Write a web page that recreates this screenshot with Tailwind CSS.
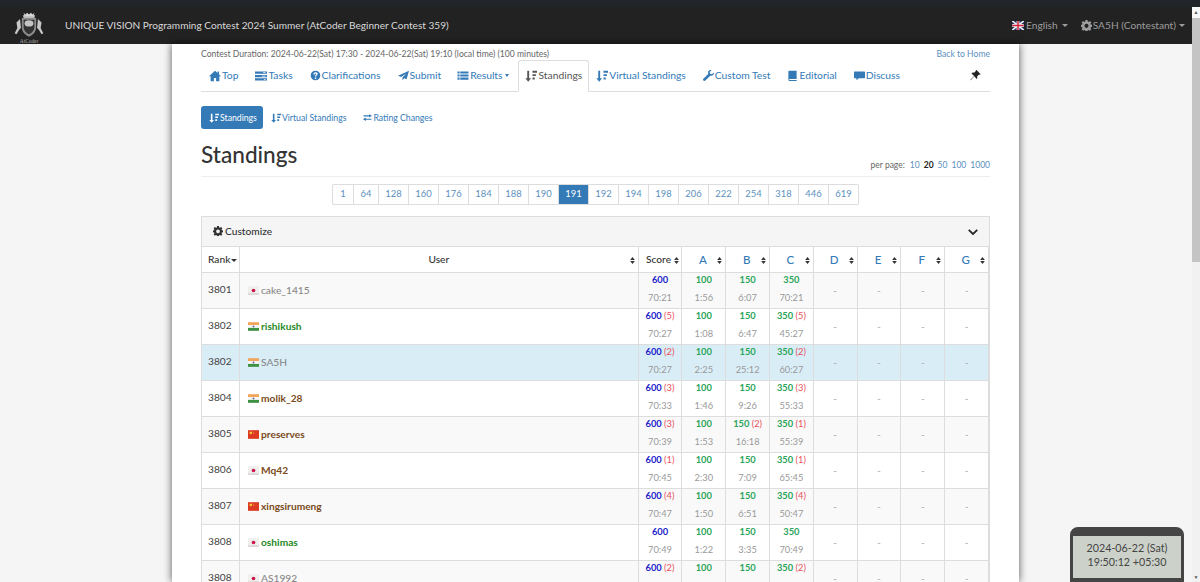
<!DOCTYPE html>
<html lang="en">
<head>
  <meta charset="UTF-8">
  <meta name="viewport" content="width=device-width, initial-scale=1.0">
  <title>Standings - AtCoder Beginner Contest 359</title>
  <script src="https://cdn.jsdelivr.net/npm/@tailwindcss/browser@4"></script>
</head>
<body class="h-[582px] overflow-hidden bg-[#f5f5f5] font-['Lato','Noto_Sans',sans-serif] text-[#333]">
  <svg class="hidden">
    <symbol id="i-home" viewBox="0 0 16 16"><path fill="currentColor" d="M8 1 0 8.400h2.200V15h4.300v-4.400h3V15h4.300V8.400H16l-2.600-2.500V2h-2v2Z"/></symbol>
    <symbol id="i-tasks" viewBox="0 0 16 16"><path fill="currentColor" d="M0 2h16v3H0Zm0 4.500h16v3H0ZM0 11h16v3H0Z"/><path fill="#fff" d="M11 3h3v1h-3Zm-2 4.500h5v1H9Zm3 4.500h2v1h-2Z"/></symbol>
    <symbol id="i-question" viewBox="0 0 16 16"><path fill="currentColor" fill-rule="evenodd" d="M8 1a7 7 0 1 1 0 14A7 7 0 0 1 8 1ZM7 11v2h2v-2ZM5 6.500h2c0-1 .5-1.300 1-1.300s1 .3 1 .9c0 1-2 1.200-2 3.400h2c0-1.600 2.200-1.900 2.200-3.900C11.200 4 9.800 3.300 8 3.300S5 4.500 5 6.500Z"/></symbol>
    <symbol id="i-send" viewBox="0 0 16 16"><path fill="currentColor" d="M16 1 0 8.500l4.500 1.700L12 5 6.500 11v4l2.500-3 3.500 1.500Z"/></symbol>
    <symbol id="i-list" viewBox="0 0 16 16"><path fill="currentColor" d="M0 2h3v3H0Zm4 0h12v3H4ZM0 6.500h3v3H0Zm4 0h12v3H4ZM0 11h3v3H0Zm4 0h12v3H4Z"/></symbol>
    <symbol id="i-sort" viewBox="0 0 16 16"><path fill="currentColor" d="M3 1h2.500v10H8l-3.700 4.500L.5 11H3Zm7 0h6v2.600h-6Zm0 4.500h4.500v2.600H10Zm0 4.500h3v2.600h-3Z"/></symbol>
    <symbol id="i-wrench" viewBox="0 0 16 16"><path fill="currentColor" d="M15.700 3.500 13 6.200l-2.600-.7-.7-2.600L12.400.3C10.300-.4 8 .6 7.500 2.800c-.2 1 0 1.900.3 2.600L.6 12.600c-.8.800-.8 2 0 2.800.8.800 2 .8 2.800 0l7.200-7.200c2.500 1 5.500-1 5.300-3.700 0-.4-.1-.7-.2-1Z"/></symbol>
    <symbol id="i-book" viewBox="0 0 16 16"><path fill="currentColor" d="M3.500 1H14v12H4c-.6 0-1 .3-1 .7s.4.800 1 .800h10V16H3.500C2.500 16 2 15.200 2 14.300V2.500C2 1.600 2.600 1 3.500 1Z"/></symbol>
    <symbol id="i-comment" viewBox="0 0 16 16"><path fill="currentColor" d="M1 2h14c.6 0 1 .4 1 1v8c0 .6-.4 1-1 1H7l-3.500 3v-3H1c-.6 0-1-.4-1-1V3c0-.6.4-1 1-1Z"/></symbol>
    <symbol id="i-pin" viewBox="0 0 16 16"><path fill="currentColor" d="m9.500 0 6 6-1.300 1-1-.6-2.800 2.800c.5 1.500.2 3-.8 4L6.300 9 1 15l-.6-.4L6 8.800 2 4.700c1-1 2.600-1.300 4-.8l2.800-2.700-.6-1Z"/></symbol>
    <symbol id="i-cog" viewBox="0 0 16 16"><path fill="currentColor" fill-rule="evenodd" d="M6.500 0h3l.4 2.200 1.300.6L13 1.500 15 3.600l-1.300 1.800.5 1.300 2.200.4v3l-2.200.4-.5 1.300 1.300 1.800-2.100 2.100-1.800-1.300-1.300.5-.4 2.200h-3l-.4-2.200-1.300-.5L3 15.700.9 13.600l1.300-1.800-.5-1.300L0 10.100v-3l1.700-.4.500-1.300L.9 3.600 3 1.500l1.800 1.300 1.300-.6ZM8 5.500a3 3 0 1 0 0 6 3 3 0 0 0 0-6Z"/></symbol>
    <symbol id="i-chevron" viewBox="0 0 16 16"><path fill="currentColor" d="m2.200 3.500 5.800 5.700 5.800-5.700 2 2L8 13.300.2 5.500Z"/></symbol>
    <symbol id="i-transfer" viewBox="0 0 16 16"><path fill="currentColor" d="M11 2l5 3-5 3V6H1V4h10ZM5 8v2h10v2H5v2l-5-3Z"/></symbol>
    <symbol id="i-updown" viewBox="0 0 8 12"><path fill="currentColor" d="M4 0 8 5H0ZM4 12 0 7h8Z"/></symbol>
    <symbol id="f-jp" viewBox="0 0 14 11"><path fill="#f1eeee" d="M0 0h14v11H0Z"/><path fill="#d8d4d4" d="M0 9h14v2H0Z"/><circle cx="7" cy="5.500" r="2.300" fill="#c9174a"/></symbol>
    <symbol id="f-in" viewBox="0 0 14 11"><path fill="#f2a65a" d="M0 0h14v3.700H0Z"/><path fill="#f6f6f6" d="M0 3.700h14v3.600H0Z"/><path fill="#3d9142" d="M0 7.300h14V11H0Z"/><circle cx="7" cy="5.500" r="1.200" fill="#5a6a9a"/></symbol>
    <symbol id="f-cn" viewBox="0 0 14 11"><path fill="#dc3a22" d="M0 0h14v11H0Z"/><path fill="#f5c842" d="M2 2h3v3H2Zm4 0h1v1H6Zm1 2h1v1H7Z"/></symbol>
    <symbol id="f-gb" viewBox="0 0 14 11"><path fill="#27306e" d="M0 0h14v11H0Z"/><path stroke="#f4f4f4" stroke-width="2" d="m0 0 14 11M14 0 0 11"/><path stroke="#f4f4f4" stroke-width="3.500" d="M7 0v11M0 5.500h14"/><path stroke="#d0243a" stroke-width="1.800" d="M7 0v11M0 5.500h14"/></symbol>
  </svg>

  <div class="h-[7px] bg-[#212529]"></div>
  <div class="flex h-[575px]">
    <div class="flex min-w-0 flex-1 flex-col">
      <header class="flex h-[37px] shrink-0 items-center bg-[#222] text-[#9d9d9d]">
        <svg class="ml-[10px] h-[34px] w-[38px] shrink-0 translate-y-[1px]" viewBox="0 0 38 38">
          <path fill="#bcbcbc" d="M12 6h14l-1 3H13Z"/>
          <path fill="#d8d8d8" d="M13 3l2 2 2-2 2 2 2-2 2 2 2-2-1 4H14Z"/>
          <path fill="#8d8d8d" d="M11 9h16v10c0 6-4 9-8 11-4-2-8-5-8-11Z"/>
          <path fill="#333" d="M13 11h12v8c0 4-3 7-6 8-3-1-6-4-6-8Z"/>
          <ellipse cx="19" cy="15" rx="5" ry="3.500" fill="#c4c4c4"/>
          <path fill="#c8c8c8" d="M9 10 5 14l1 6-3 6 2 1 3-5 2-2Zm20 0 4 4-1 6 3 6-2 1-3-5-2-2Z"/>
          <text x="19" y="36.500" text-anchor="middle" font-size="6" fill="#aaa" font-family="Liberation Serif, serif">AtCoder</text>
        </svg>
        <span class="ml-[17px] text-[10.1px] text-[#d9d9d9]">UNIQUE VISION Programming Contest 2024 Summer (AtCoder Beginner Contest 359)</span>
        <div class="ml-auto flex items-center pr-[7px] text-[10.2px]">
          <svg class="mr-[2px] h-[9px] w-[12px]"><use href="#f-gb"/></svg>
          <span>English</span>
          <span class="ml-[4px] h-0 w-0 border-x-[3px] border-t-[3px] border-x-transparent border-t-[#9d9d9d]"></span>
          <svg class="ml-[13px] mr-[1px] h-[11px] w-[11px]"><use href="#i-cog"/></svg>
          <span>SA5H (Contestant)</span>
          <span class="ml-[3px] h-0 w-0 border-x-[3px] border-t-[3px] border-x-transparent border-t-[#9d9d9d]"></span>
        </div>
      </header>

      <div class="min-h-0 flex-1">
        <main class="ml-[172px] h-full w-[847px] bg-white px-[29px] pt-[4px] shadow-[0_0_8px_rgba(0,0,0,0.65)]">
          <div class="flex h-[12px] items-start justify-between text-[8.6px] leading-[12px]">
            <span class="text-[#666]">Contest Duration: 2024-06-22(Sat) 17:30 - 2024-06-22(Sat) 19:10 (local time) (100 minutes)</span>
            <a class="text-[#5b8fbe]">Back to Home</a>
          </div>

          <nav class="flex h-[32px] items-end border-b border-[#ddd] text-[10.3px] text-[#337ab7]">
            <a class="flex h-[31px] items-center gap-[1px] px-[8px]"><svg class="h-[12px] w-[12px]"><use href="#i-home"/></svg>Top</a>
            <a class="ml-[1px] flex h-[31px] items-center gap-[1px] px-[8px]"><svg class="h-[12px] w-[12px]"><use href="#i-tasks"/></svg>Tasks</a>
            <a class="ml-[1px] flex h-[31px] items-center gap-[1px] px-[8px]"><svg class="h-[11px] w-[11px]"><use href="#i-question"/></svg>Clarifications</a>
            <a class="ml-[1px] flex h-[31px] items-center gap-[1px] px-[8px]"><svg class="h-[11px] w-[11px]"><use href="#i-send"/></svg>Submit</a>
            <a class="flex h-[31px] items-center gap-[1px] px-[8px]"><svg class="h-[11px] w-[12px]"><use href="#i-list"/></svg>Results<span class="ml-[2px] mr-[-1px] h-0 w-0 border-x-[2.500px] border-t-[3px] border-x-transparent border-t-[#337ab7]"></span></a>
            <a class="z-10 mb-[-1px] ml-[2px] flex h-[32px] items-center gap-[1px] rounded-t-[3px] border border-[#ddd] border-b-white bg-white px-[6px] text-[#555]"><svg class="h-[12px] w-[12px]"><use href="#i-sort"/></svg>Standings</a>
            <a class="ml-[-1px] flex h-[31px] items-center gap-[1px] px-[8px]"><svg class="h-[12px] w-[12px]"><use href="#i-sort"/></svg>Virtual Standings</a>
            <a class="ml-[1px] flex h-[31px] items-center gap-[1px] px-[8px]"><svg class="h-[11px] w-[11px]"><use href="#i-wrench"/></svg>Custom Test</a>
            <a class="ml-[1px] flex h-[31px] items-center gap-[1px] px-[8px]"><svg class="h-[11px] w-[11px]"><use href="#i-book"/></svg>Editorial</a>
            <a class="ml-[1px] flex h-[31px] items-center gap-[1px] px-[8px]"><svg class="h-[11px] w-[11px]"><use href="#i-comment"/></svg>Discuss</a>
            <svg class="mb-[10px] ml-auto mr-[9px] h-[11px] w-[11px] text-[#222]"><use href="#i-pin"/></svg>
          </nav>

          <div class="mt-[14px] flex h-[23px] items-center text-[8.7px] text-[#337ab7]">
            <a class="flex h-[23px] items-center gap-[1px] rounded-[3px] bg-[#337ab7] pl-[8px] pr-[6px] text-white"><svg class="h-[10px] w-[10px]"><use href="#i-sort"/></svg>Standings</a>
            <a class="flex h-[23px] items-center gap-[1px] px-[8px]"><svg class="h-[10px] w-[10px]"><use href="#i-sort"/></svg>Virtual Standings</a>
            <a class="ml-[1px] flex h-[23px] items-center gap-[1px] px-[8px]"><svg class="h-[9px] w-[9px]"><use href="#i-transfer"/></svg>Rating Changes</a>
          </div>

          <div class="mt-[11px] flex h-[37px] items-end justify-between border-b border-[#eee] pb-[4px]">
            <h1 class="mb-[3px] text-[22.6px] leading-[28px] font-medium text-[#333]">Standings</h1>
            <div class="flex gap-[4px] text-[8.5px] text-[#5b8fbe]">
              <span class="mr-[1px] text-[#666]">per page:</span>
              <a>10</a><a class="font-bold text-[#222]">20</a><a>50</a><a>100</a><a>1000</a>
            </div>
          </div>

          <div id="pager" class="mt-[7px] ml-[131px] flex h-[21px] w-fit rounded-[2px] border-y border-l border-[#ddd] text-[9.4px] text-[#5b8fbe]"></div>

          <section class="mt-[11px] border-t border-r border-[#ddd]">
            <div class="flex h-[29px] items-center justify-between border-l border-[#ddd] bg-[#f5f5f5] pl-[11px] pr-[11px] text-[10.2px] text-[#333]">
              <span class="flex items-center gap-[2px] font-medium"><svg class="h-[10px] w-[10px]"><use href="#i-cog"/></svg>Customize</span>
              <svg class="h-[10px] w-[10px] text-[#222]"><use href="#i-chevron"/></svg>
            </div>
            <table class="w-full table-fixed border-collapse text-[10.2px]">
              <colgroup>
                <col class="w-[38px]"><col><col class="w-[43.8px]"><col class="w-[43.8px]"><col class="w-[43.8px]"><col class="w-[43.8px]"><col class="w-[43.8px]"><col class="w-[43.8px]"><col class="w-[43.8px]"><col class="w-[43.8px]">
              </colgroup>
              <thead>
                <tr class="h-[26px] text-[#333]">
                  <th class="border border-[#ddd] px-[6px] text-left font-medium whitespace-nowrap">Rank<span class="ml-[1px] inline-block h-0 w-0 border-x-[3px] border-t-[3px] border-x-transparent border-t-[#333] align-middle"></span></th>
                  <th class="relative border border-[#ddd] font-medium">User<svg class="absolute top-[10px] right-[3px] h-[7px] w-[5px]"><use href="#i-updown"/></svg></th>
                  <th class="relative border border-[#ddd] pr-[3px] font-medium">Score<svg class="absolute top-[10px] right-[2px] h-[7px] w-[5px]"><use href="#i-updown"/></svg></th>
                  <th class="relative border border-[#ddd] pr-[2px] text-[11.5px] font-medium text-[#337ab7]">A<svg class="absolute top-[10px] right-[3px] h-[7px] w-[5px] text-[#333]"><use href="#i-updown"/></svg></th>
                  <th class="relative border border-[#ddd] pr-[2px] text-[11.5px] font-medium text-[#337ab7]">B<svg class="absolute top-[10px] right-[3px] h-[7px] w-[5px] text-[#333]"><use href="#i-updown"/></svg></th>
                  <th class="relative border border-[#ddd] pr-[2px] text-[11.5px] font-medium text-[#337ab7]">C<svg class="absolute top-[10px] right-[3px] h-[7px] w-[5px] text-[#333]"><use href="#i-updown"/></svg></th>
                  <th class="relative border border-[#ddd] pr-[2px] text-[11.5px] font-medium text-[#337ab7]">D<svg class="absolute top-[10px] right-[3px] h-[7px] w-[5px] text-[#333]"><use href="#i-updown"/></svg></th>
                  <th class="relative border border-[#ddd] pr-[2px] text-[11.5px] font-medium text-[#337ab7]">E<svg class="absolute top-[10px] right-[3px] h-[7px] w-[5px] text-[#333]"><use href="#i-updown"/></svg></th>
                  <th class="relative border border-[#ddd] pr-[2px] text-[11.5px] font-medium text-[#337ab7]">F<svg class="absolute top-[10px] right-[3px] h-[7px] w-[5px] text-[#333]"><use href="#i-updown"/></svg></th>
                  <th class="relative border border-[#ddd] pr-[2px] text-[11.5px] font-medium text-[#337ab7]">G<svg class="absolute top-[10px] right-[3px] h-[7px] w-[5px] text-[#333]"><use href="#i-updown"/></svg></th>
                </tr>
              </thead>
              <tbody id="rows"></tbody>
            </table>
          </section>
        </main>
      </div>
    </div>

    <div class="flex w-2 shrink-0 flex-col bg-[#f1f1f1] text-center text-[5px] leading-[10px] text-[#555]">
      <div class="h-[11px] bg-[#f8f8f8]">▲</div>
      <div class="h-[244px] bg-[#c4c4c4]"></div>
      <div class="mt-auto">▼</div>
    </div>
  </div>

  <div class="fixed right-[16px] bottom-0 h-[55px] w-[114px] rounded-t-[8px] border-x-[3px] border-t-[9px] border-b-[4px] border-[#454545] bg-[#ccd1c9] pt-[5px] text-center text-[10.7px] leading-[14px] text-[#444]">
    2024-06-22 (Sat)<br>19:50:12 +05:30
  </div>

  <script>
    const pages = [1, 64, 128, 160, 176, 184, 188, 190, 191, 192, 194, 198, 206, 222, 254, 318, 446, 619];
    document.getElementById('pager').innerHTML = pages.map((p) => {
      const width = p === 1 ? 'w-[21px]' : p === 64 ? 'w-[25px]' : 'w-[30px]';
      const active = p === 191 ? 'bg-[#337ab7] text-white' : '';
      return `<a class="flex ${width} items-center justify-center border-r border-[#ddd] ${active}">${p}</a>`;
    }).join('');

    const rows = [
      ['3801', 'f-jp', 'cake_1415', 'text-[#888] font-medium', ['600', 0, '70:21'], ['100', 0, '1:56'], ['150', 0, '6:07'], ['350', 0, '70:21']],
      ['3802', 'f-in', 'rishikush', 'text-[#1f8a1f] font-bold', ['600', 5, '70:27'], ['100', 0, '1:08'], ['150', 0, '6:47'], ['350', 5, '45:27']],
      ['3802', 'f-in', 'SA5H', 'text-[#888] font-medium', ['600', 2, '70:27'], ['100', 0, '2:25'], ['150', 0, '25:12'], ['350', 2, '60:27']],
      ['3804', 'f-in', 'molik_28', 'text-[#7a4a1a] font-bold', ['600', 3, '70:33'], ['100', 0, '1:46'], ['150', 0, '9:26'], ['350', 3, '55:33']],
      ['3805', 'f-cn', 'preserves', 'text-[#7a4a1a] font-bold', ['600', 3, '70:39'], ['100', 0, '1:53'], ['150', 2, '16:18'], ['350', 1, '55:39']],
      ['3806', 'f-jp', 'Mq42', 'text-[#7a4a1a] font-bold', ['600', 1, '70:45'], ['100', 0, '2:30'], ['150', 0, '7:09'], ['350', 1, '65:45']],
      ['3807', 'f-cn', 'xingsirumeng', 'text-[#7a4a1a] font-bold', ['600', 4, '70:47'], ['100', 0, '1:50'], ['150', 0, '6:51'], ['350', 4, '50:47']],
      ['3808', 'f-jp', 'oshimas', 'text-[#1f8a1f] font-bold', ['600', 0, '70:49'], ['100', 0, '1:22'], ['150', 0, '3:35'], ['350', 0, '70:49']],
      ['3808', 'f-jp', 'AS1992', 'text-[#888] font-medium', ['600', 2], ['100', 0], ['150', 0], ['350', 2]],
    ];

    const scoreCell = ([score, wrong, time], color) => `
      <td class="border border-[#ddd] p-0 text-center align-top text-[9.3px]">
        <div class="h-[17px] leading-[13px] font-bold ${color}">${score}${wrong ? `<span class="font-normal text-[#e8505b]"> (${wrong})</span>` : ''}</div>
        <div class="h-[17px] leading-[15px] text-[#999]">${time || ''}</div>
      </td>`;
    const dash = '<td class="border border-[#ddd] text-center text-[#aaa]">-</td>';

    document.getElementById('rows').innerHTML = rows.map((r, i) => {
      const stripe = r[2] === 'SA5H' ? 'bg-[#d9edf7]' : i % 2 === 0 ? 'bg-[#f9f9f9]' : 'bg-white';
      return `<tr class="h-[36px] ${stripe}">
        <td class="border border-[#ddd] px-[6px] pt-[9px] align-top text-[#444]">${r[0]}</td>
        <td class="border border-[#ddd] px-[8px] pt-[10px] align-top"><span class="flex items-center gap-[2px] text-[10.2px] ${r[3]}"><svg class="h-[9px] w-[11px] shrink-0"><use href="#${r[1]}"/></svg>${r[2]}</span></td>
        ${scoreCell(r[4], 'text-[#2222cc]')}
        ${scoreCell(r[5], 'text-[#2ba45a]')}
        ${scoreCell(r[6], 'text-[#2ba45a]')}
        ${scoreCell(r[7], 'text-[#2ba45a]')}
        ${dash}${dash}${dash}${dash}
      </tr>`;
    }).join('');
  </script>
</body>
</html>
